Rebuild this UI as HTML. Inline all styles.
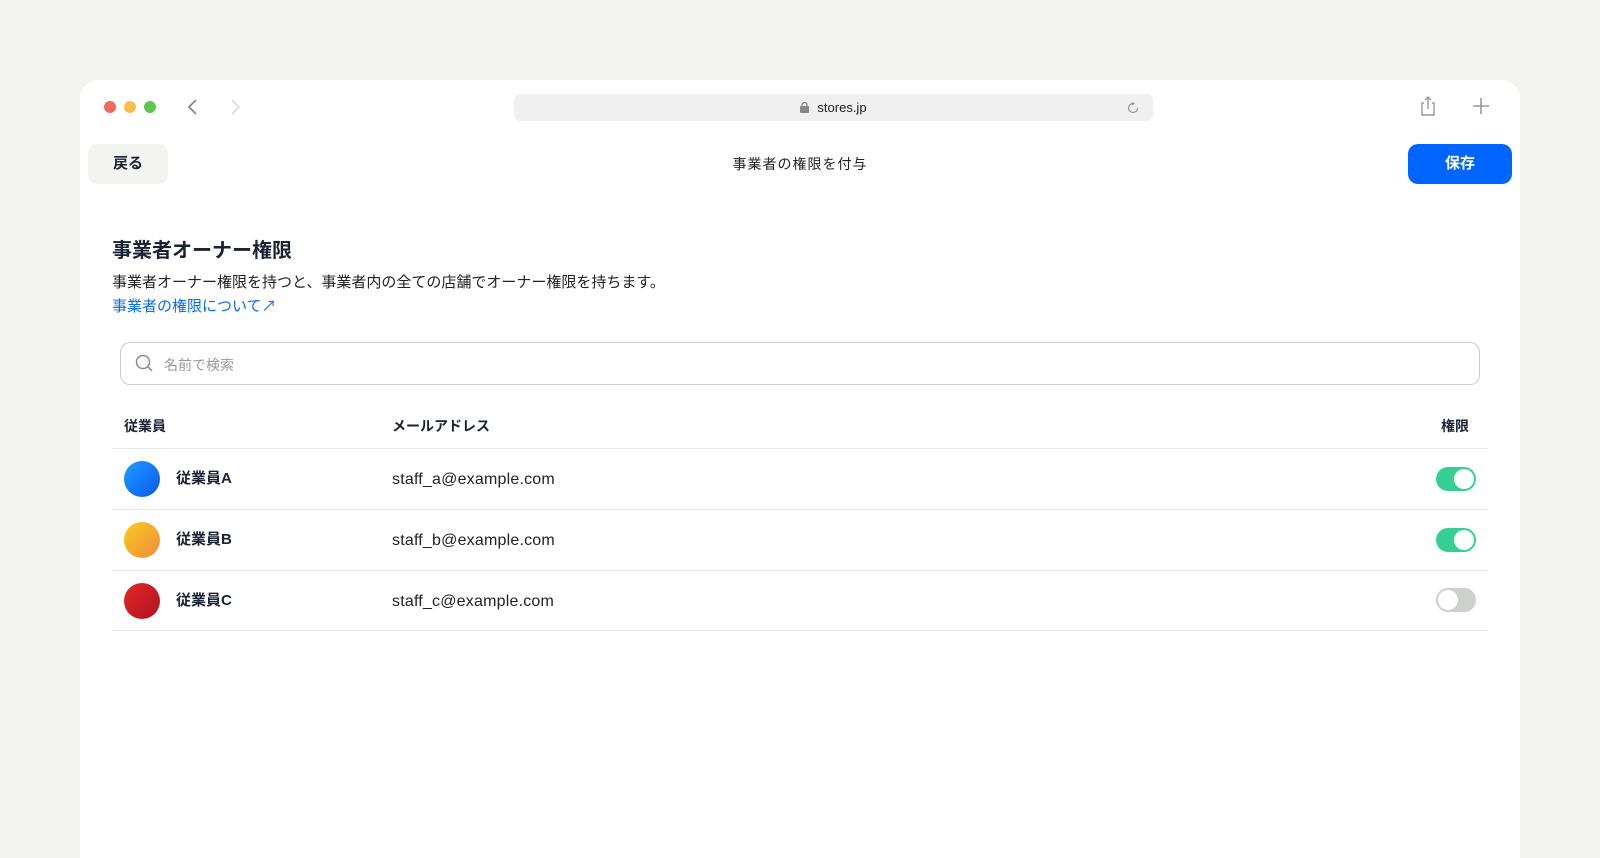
<!DOCTYPE html>
<html style="height:858px;overflow:hidden"><head><meta charset="utf-8"><style>
*{margin:0;padding:0;box-sizing:border-box}
body{width:1600px;height:858px;background:#f3f3f0;font-family:"Liberation Sans","Noto Sans CJK JP",sans-serif;color:#1a2233;position:relative;overflow:hidden}
.win{position:absolute;left:80px;top:80px;width:1440px;height:800px;background:#fff;border-radius:18px}
.abs{position:absolute}
.dot{position:absolute;top:21px;width:12px;height:12px;border-radius:50%}
.url{position:absolute;left:434px;top:14px;width:639px;height:27px;background:#f0f0f0;border-radius:6px;font-size:13px;text-align:center;line-height:27px;color:#222}
.btn{position:absolute;top:64px;height:40px;border-radius:10px;font-size:15px;font-weight:bold;text-align:center;line-height:40px}
.row{position:absolute;left:32px;width:1376px;border-bottom:1px solid #e6e6e6}
.av{position:absolute;left:12px;width:36px;height:36px;border-radius:50%}
.nm{position:absolute;left:64px;font-size:15px;font-weight:bold;line-height:20px}
.em{position:absolute;left:280px;font-size:16px;color:#222;line-height:20px;letter-spacing:0.2px}
.tg{position:absolute;left:1324px;width:40px;height:24px;border-radius:12px}
.tg i{position:absolute;top:2px;width:20px;height:20px;border-radius:50%;background:#fff}
</style></head><body>
<div class="win">
<div class="dot" style="left:24px;background:#ee6a5f"></div>
<div class="dot" style="left:44px;background:#f5be4f"></div>
<div class="dot" style="left:64px;background:#61c554"></div>
<svg class="abs" style="left:106px;top:18px" width="12" height="18"><path d="M10 2L3 9l7 7" fill="none" stroke="#888" stroke-width="1.8"/></svg>
<svg class="abs" style="left:150px;top:18px" width="12" height="18"><path d="M2 2l7 7-7 7" fill="none" stroke="#ddd" stroke-width="1.8"/></svg>
<div class="url"><svg width="9" height="11" style="vertical-align:-1px;margin-right:8px"><rect x="0" y="4" width="9" height="7" rx="1" fill="#888"/><path d="M2 5V3a2.5 2.5 0 015 0v2" fill="none" stroke="#888" stroke-width="1.3"/></svg>stores.jp
<svg class="abs" style="right:14px;top:8px" width="12" height="12"><path d="M6 1.5A4.5 4.5 0 1 0 10.5 6" fill="none" stroke="#999" stroke-width="1.2"/><path d="M5 0l2 1.5L5 3" fill="none" stroke="#999" stroke-width="1.1"/></svg></div>
<svg class="abs" style="left:1340px;top:15px" width="16" height="22"><path d="M4 8H2v12h12V8h-2M8 14V2M5 5l3-3 3 3" fill="none" stroke="#999" stroke-width="1.4"/></svg>
<svg class="abs" style="left:1392px;top:17px" width="18" height="18"><path d="M9 1v16M1 9h16" stroke="#999" stroke-width="1.6"/></svg>
<div class="btn" style="left:8px;width:80px;background:#f3f3f0;color:#1a2233">戻る</div>
<div class="abs" style="left:0;width:1440px;top:74px;text-align:center;font-size:14px;color:#222;letter-spacing:1px">事業者の権限を付与</div>
<div class="btn" style="left:1328px;width:104px;background:#0066ff;color:#fff">保存</div>
<div class="abs" style="left:32px;top:154px;font-size:20px;font-weight:bold">事業者オーナー権限</div>
<div class="abs" style="left:32px;top:191px;font-size:15px;color:#222">事業者オーナー権限を持つと、事業者内の全ての店舗でオーナー権限を持ちます。</div>
<div class="abs" style="left:32px;top:215px;font-size:15px;color:#0a6cf0">事業者の権限について↗</div>
<div class="abs" style="left:40px;top:262px;width:1360px;height:43px;border:1px solid #ccc;border-radius:10px">
<svg class="abs" style="left:14px;top:11px" width="20" height="20"><circle cx="8" cy="8" r="6.5" fill="none" stroke="#889" stroke-width="1.5"/><path d="M13 13l4 4" stroke="#889" stroke-width="1.5"/></svg>
<div class="abs" style="left:43px;top:12px;font-size:14px;color:#999">名前で検索</div></div>
<div class="row" style="top:326px;height:43px"><span class="abs" style="left:12px;top:10px;font-size:14px;font-weight:bold">従業員</span><span class="abs" style="left:280px;top:10px;font-size:14px;font-weight:bold">メールアドレス</span><span class="abs" style="left:1329px;top:10px;font-size:14px;font-weight:bold">権限</span></div>
<div class="row" style="top:369px;height:61px"><div class="av" style="top:12px;background:linear-gradient(135deg,#1ea0ff,#0a55ee)"></div><span class="nm" style="top:20px">従業員A</span><span class="em" style="top:21px">staff_a@example.com</span><div class="tg" style="top:18px;background:#36cf93"><i style="left:18px"></i></div></div>
<div class="row" style="top:430px;height:61px"><div class="av" style="top:12px;background:linear-gradient(135deg,#f7cd22,#f08a3a)"></div><span class="nm" style="top:20px">従業員B</span><span class="em" style="top:21px">staff_b@example.com</span><div class="tg" style="top:18px;background:#36cf93"><i style="left:18px"></i></div></div>
<div class="row" style="top:491px;height:60px"><div class="av" style="top:12px;background:linear-gradient(135deg,#e02a2a,#b0101e)"></div><span class="nm" style="top:20px">従業員C</span><span class="em" style="top:21px">staff_c@example.com</span><div class="tg" style="top:17px;background:#cdd0cc"><i style="left:2px"></i></div></div>
</div>
</body></html>
